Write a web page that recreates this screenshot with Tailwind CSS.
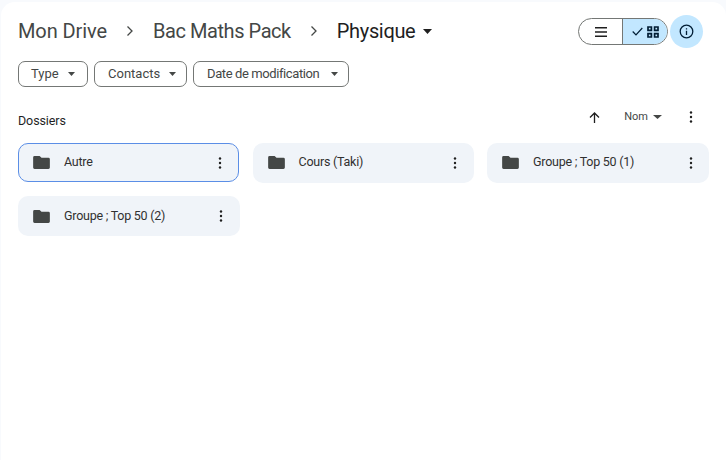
<!DOCTYPE html>
<html lang="fr"><head><meta charset="utf-8"><script src="https://cdn.jsdelivr.net/npm/@tailwindcss/browser@4"></script></head>
<body class="bg-[#f8fafd] font-['Roboto','Liberation_Sans',sans-serif]">
<div class="w-[726px] h-[460px] overflow-hidden pt-[2px] pl-[1px]">
<main class="w-[725px] h-[458px] bg-white rounded-tl-[14px] rounded-tr-[14px] pl-[17px] pr-[22px] flex flex-col">
  <header class="h-[43px] mt-[8px] flex items-center justify-between">
    <nav class="flex items-center text-[20px] text-[#444746] -mt-[1px]">
      <span class="tracking-[-0.1px]">Mon Drive</span>
      <svg class="w-[8px] h-[12px] ml-[19px] mr-[19px]" viewBox="0 0 8 12" fill="none" stroke="#444746" stroke-width="1.300"><path d="M1.500 1.500 6 6l-4.500 4.500"/></svg>
      <span class="tracking-[-0.43px]">Bac Maths Pack</span>
      <svg class="w-[8px] h-[12px] ml-[19px] mr-[19px]" viewBox="0 0 8 12" fill="none" stroke="#444746" stroke-width="1.300"><path d="M1.500 1.500 6 6l-4.500 4.500"/></svg>
      <span class="text-[#1f1f1f] tracking-[-0.35px]">Physique</span>
      <svg class="w-[9px] h-[5px] ml-[8px]" viewBox="0 0 9 5" fill="#1f1f1f"><path d="M0 0h9L4.500 5z"/></svg>
    </nav>
    <div class="flex items-center gap-[2px] mr-[1px]">
      <div class="flex w-[90px] h-[27px] rounded-full border border-[#747775] overflow-hidden">
        <div class="w-[44px] flex items-center justify-center border-r border-[#747775]">
          <svg class="w-[12px] h-[10px]" viewBox="0 0 12 10" fill="#1f1f1f"><path d="M0 0h12v1.400H0zM0 4.300h12v1.400H0zM0 8.600h12V10H0z"/></svg>
        </div>
        <div class="flex-1 bg-[#c2e7ff] flex items-center pl-[9px] gap-[4px]">
          <svg class="w-[11px] h-[9px]" viewBox="0 0 11 9" fill="none" stroke="#001d35" stroke-width="1.200"><path d="M.7 4.500 4 7.800 10.300 1"/></svg>
          <svg class="w-[12px] h-[12px]" viewBox="0 0 12 12" fill="none" stroke="#001d35" stroke-width="1.700"><path d="M1 1h3.400v3.400H1zM7.600 1H11v3.400H7.600zM1 7.600h3.400V11H1zM7.600 7.600H11V11H7.600z"/></svg>
        </div>
      </div>
      <div class="w-[33px] h-[33px] rounded-full bg-[#c2e7ff] flex items-center justify-center">
        <svg class="w-[15px] h-[15px]" viewBox="0 0 15 15" fill="none" stroke="#001d35" stroke-width="1.300"><circle cx="7.500" cy="7.500" r="6.300"/><path d="M7.500 6.700v4.200M7.500 4.200v1.300"/></svg>
      </div>
    </div>
  </header>
  <div class="flex gap-[6px] mt-[8px]">
    <button class="h-[26px] w-[70px] rounded-[7px] border border-[#747775] flex items-center pl-[12px] text-[13px] text-[#444746]">Type<svg class="w-[7px] h-[4px] ml-auto mr-[12px]" viewBox="0 0 7 4" fill="#444746"><path d="M0 0h7L3.500 4z"/></svg></button>
    <button class="h-[26px] w-[93px] rounded-[7px] border border-[#747775] flex items-center pl-[13px] text-[13px] text-[#444746]">Contacts<svg class="w-[7px] h-[4px] ml-auto mr-[10px]" viewBox="0 0 7 4" fill="#444746"><path d="M0 0h7L3.500 4z"/></svg></button>
    <button class="h-[26px] w-[156px] rounded-[7px] border border-[#747775] flex items-center pl-[13px] text-[13px] text-[#444746]"><span class="tracking-[-0.4px]">Date de modification</span><svg class="w-[7px] h-[4px] ml-auto mr-[10px]" viewBox="0 0 7 4" fill="#444746"><path d="M0 0h7L3.500 4z"/></svg></button>
  </div>
  <div class="flex items-center justify-between h-[24px] mt-[22px]">
    <h2 class="text-[12.500px] text-[#1f1f1f] tracking-[-0.1px]">Dossiers</h2>
    <div class="flex items-center text-[#444746] mb-[8px]">
      <svg class="w-[11px] h-[11px] mr-[24px]" viewBox="0 0 11 11" fill="none" stroke="#1f1f1f" stroke-width="1.300"><path d="M5.500 11V1M1 5.500l4.500-4.500L10 5.500"/></svg>
      <span class="text-[11px]">Nom</span>
      <svg class="w-[9px] h-[4px] ml-[5px] mr-[27px]" viewBox="0 0 9 4" fill="#444746"><path d="M0 0h9L4.500 4z"/></svg>
      <svg class="w-[4px] h-[12px] mr-[11px]" viewBox="0 0 4 12" fill="#1f1f1f"><circle cx="2" cy="1.500" r="1.200"/><circle cx="2" cy="6" r="1.200"/><circle cx="2" cy="10.500" r="1.200"/></svg>
    </div>
  </div>
  <div class="grid grid-cols-[221.500px_221.500px_221.500px] gap-x-[13px] gap-y-[13.500px] mt-[9.500px]">
    <div class="h-[39px] mt-[0.5px] mr-[0.5px] rounded-[10px] bg-[#f0f4f9] border border-[#5b8ee6] flex items-center pl-[14px] pr-[16px] text-[12.500px] tracking-[-0.25px] text-[#303030]">
      <svg class="w-[17px] h-[13px] shrink-0" viewBox="0 0 18 14" fill="#444746"><path d="M1.500 0H7l2 2h7.500A1.500 1.500 0 0 1 18 3.500v9a1.500 1.500 0 0 1-1.500 1.500h-15A1.500 1.500 0 0 1 0 12.500v-11A1.500 1.500 0 0 1 1.500 0z"/></svg>
      <span class="ml-[14px]">Autre</span>
      <svg class="w-[4px] h-[12px] ml-auto" viewBox="0 0 4 12" fill="#1f1f1f"><circle cx="2" cy="1.500" r="1.200"/><circle cx="2" cy="6" r="1.200"/><circle cx="2" cy="10.500" r="1.200"/></svg>
    </div>
    <div class="h-[40px] rounded-[10px] bg-[#f0f4f9] flex items-center pl-[15px] pr-[17px] text-[12.500px] tracking-[-0.25px] text-[#303030]">
      <svg class="w-[17px] h-[13px] shrink-0" viewBox="0 0 18 14" fill="#444746"><path d="M1.500 0H7l2 2h7.500A1.500 1.500 0 0 1 18 3.500v9a1.500 1.500 0 0 1-1.500 1.500h-15A1.500 1.500 0 0 1 0 12.500v-11A1.500 1.500 0 0 1 1.500 0z"/></svg>
      <span class="ml-[14px]">Cours (Taki)</span>
      <svg class="w-[4px] h-[12px] ml-auto" viewBox="0 0 4 12" fill="#1f1f1f"><circle cx="2" cy="1.500" r="1.200"/><circle cx="2" cy="6" r="1.200"/><circle cx="2" cy="10.500" r="1.200"/></svg>
    </div>
    <div class="h-[40px] rounded-[10px] bg-[#f0f4f9] flex items-center pl-[15px] pr-[16px] text-[12.500px] tracking-[-0.25px] text-[#303030]">
      <svg class="w-[17px] h-[13px] shrink-0" viewBox="0 0 18 14" fill="#444746"><path d="M1.500 0H7l2 2h7.500A1.500 1.500 0 0 1 18 3.500v9a1.500 1.500 0 0 1-1.500 1.500h-15A1.500 1.500 0 0 1 0 12.500v-11A1.500 1.500 0 0 1 1.500 0z"/></svg>
      <span class="ml-[14px]">Groupe ; Top 50 (1)</span>
      <svg class="w-[4px] h-[12px] ml-auto" viewBox="0 0 4 12" fill="#1f1f1f"><circle cx="2" cy="1.500" r="1.200"/><circle cx="2" cy="6" r="1.200"/><circle cx="2" cy="10.500" r="1.200"/></svg>
    </div>
    <div class="h-[40px] rounded-[10px] bg-[#f0f4f9] flex items-center pl-[15px] pr-[17px] text-[12.500px] tracking-[-0.25px] text-[#303030]">
      <svg class="w-[17px] h-[13px] shrink-0" viewBox="0 0 18 14" fill="#444746"><path d="M1.500 0H7l2 2h7.500A1.500 1.500 0 0 1 18 3.500v9a1.500 1.500 0 0 1-1.500 1.500h-15A1.500 1.500 0 0 1 0 12.500v-11A1.500 1.500 0 0 1 1.500 0z"/></svg>
      <span class="ml-[14px]">Groupe ; Top 50 (2)</span>
      <svg class="w-[4px] h-[12px] ml-auto" viewBox="0 0 4 12" fill="#1f1f1f"><circle cx="2" cy="1.500" r="1.200"/><circle cx="2" cy="6" r="1.200"/><circle cx="2" cy="10.500" r="1.200"/></svg>
    </div>
  </div>
</main>
</div>
</body></html>
